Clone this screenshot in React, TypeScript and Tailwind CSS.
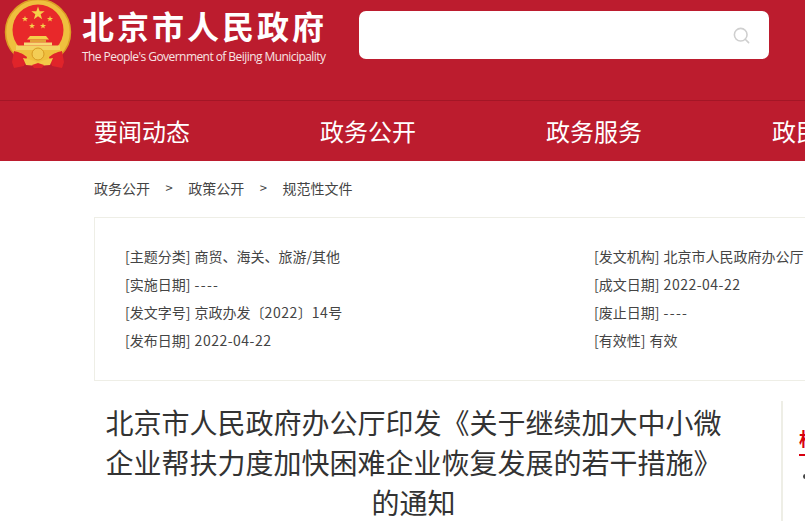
import { Search } from "lucide-react";

const cjk = "font-['Microsoft_YaHei','Noto_Sans_CJK_SC',sans-serif]";

const navItems = ["要闻动态", "政务公开", "政务服务", "政民互动"];

const leftMeta = [
  ["[主题分类]", "商贸、海关、旅游/其他"],
  ["[实施日期]", "----"],
  ["[发文字号]", "京政办发〔2022〕14号"],
  ["[发布日期]", "2022-04-22"],
];

const rightMeta = [
  ["[发文机构]", "北京市人民政府办公厅"],
  ["[成文日期]", "2022-04-22"],
  ["[废止日期]", "----"],
  ["[有效性]", "有效"],
];

function Emblem() {
  const stars = [
    [38, 14.5, 7],
    [25, 20, 3.2],
    [50, 20, 3.2],
    [32, 27, 3.2],
    [43, 27, 3.2],
  ];
  const star = (cx: number, cy: number, r: number) =>
    Array.from({ length: 10 }, (_, i) => {
      const a = (Math.PI / 5) * i - Math.PI / 2;
      const d = i % 2 ? r * 0.4 : r;
      return `${cx + d * Math.cos(a)},${cy + d * Math.sin(a)}`;
    }).join(" ");
  return (
    <svg viewBox="0 0 76 72" className="w-[76px] h-[72px] shrink-0">
      <circle cx="38" cy="33" r="32.5" fill="#efbf3e" stroke="#dc9f24" strokeWidth="1.5" />
      <circle cx="38" cy="31" r="25.5" fill="#e8282a" />
      {stars.map(([x, y, r]) => (
        <polygon key={`${x}-${y}`} points={star(x, y, r)} fill="#f5cf4a" />
      ))}
      <path d="M30 37h16l3 3.5H27z" fill="#f5cf4a" />
      <path d="M30 40.5h16v3H30z" fill="#e3a238" />
      <path d="M24 43.5h28v3H24z" fill="#f6d975" />
      <path d="M16 46.5h44V51H16z" fill="#f3d264" />
      <path d="M13 51h50l-3 9H16z" fill="#efbf3e" />
      <path d="M14 52c4 1 8 2 13 6l-3 9-10 2-2-6z" fill="#e0242a" />
      <path d="M62 52c-4 1-8 2-13 6l3 9 10 2 2-6z" fill="#e0242a" />
      <circle cx="38" cy="55" r="6" fill="#f3cd55" stroke="#d89a22" strokeWidth="1" />
      <path d="M23 59c5 1 10 2 15 5 5-3 10-4 15-5l-3 7-12 1-12-1z" fill="#f3c848" />
      <path d="M32 66l6-2 6 2-2 3h-8z" fill="#e0242a" />
    </svg>
  );
}

// digits and dashes run a little wider than the CJK font's own
function MetaValue({ value }: { value: string }) {
  return (
    <span className="ml-[1px]">
      {value.split(/([\d-]+)/).map((part, i) =>
        /^-+$/.test(part) ? (
          <span key={i} className="tracking-[1.3px]">{part}</span>
        ) : /^[\d-]+$/.test(part) ? (
          <span key={i} className="tracking-[0.5px]">{part}</span>
        ) : (
          <span key={i}>{part}</span>
        )
      )}
    </span>
  );
}

function MetaColumn({ rows }: { rows: string[][] }) {
  return (
    <div className="flex flex-col shrink-0">
      {rows.map(([label, value]) => (
        <div key={label} className="h-[28px] leading-[28px] text-[14px] text-[#444] whitespace-nowrap">
          <span>{label}</span> <MetaValue value={value} />
        </div>
      ))}
    </div>
  );
}

export default function App() {
  return (
    <div className={`w-[805px] h-[521px] overflow-hidden bg-white ${cjk}`}>
      <header className="bg-[#bc1c2e]">
        <div className="h-[101px] border-b border-[#a31626] flex items-start">
          <div className="mt-[-1px]">
            <Emblem />
          </div>
          <div className="ml-[6px] w-[272px] shrink-0">
            <div className="text-[32px] leading-[50px] font-bold text-white tracking-[3px] whitespace-nowrap">
              北京市人民政府
            </div>
            <div className="mt-[-1px] text-[12px] leading-[16px] text-[#f8e4e4] tracking-[-0.56px] whitespace-nowrap font-['Open_Sans',sans-serif]">
              The People's Government of Beijing Municipality
            </div>
          </div>
          <div className="mt-[11px] w-[410px] h-[48px] ml-[5px] bg-white rounded-[7px] flex items-center justify-end pr-[18px] shrink-0">
            <Search className="w-[19px] h-[19px] text-[#cfcfcf]" strokeWidth={2} />
          </div>
        </div>
        <nav className="h-[60px] flex items-center gap-[130px] pl-[94px] whitespace-nowrap">
          {navItems.map((item) => (
            <span key={item} className="text-[24px] leading-[60px] text-white shrink-0">
              {item}
            </span>
          ))}
        </nav>
      </header>

      <div className="pl-[94px] w-[1100px]">
        <div className="h-[56px] pb-[2px] flex items-center text-[14px] text-[#444] whitespace-nowrap">
          <span>政务公开</span>
          <span className="mx-[15.5px] text-[13px]">&gt;</span>
          <span>政策公开</span>
          <span className="mx-[15.5px] text-[13px]">&gt;</span>
          <span>规范性文件</span>
        </div>

        <div className="h-[164px] w-[960px] border border-[#eeeee6] flex items-center pl-[30px] pb-[2px]">
          <div className="w-[469px] shrink-0">
            <MetaColumn rows={leftMeta} />
          </div>
          <MetaColumn rows={rightMeta} />
        </div>

        <div className="flex mt-[20px]">
          <h1 className="w-[639px] shrink-0 text-center text-[28px] leading-[40px] font-normal text-[#333] pt-[1px]">
            北京市人民政府办公厅印发《关于继续加大中小微企业帮扶力度加快困难企业恢复发展的若干措施》的通知
          </h1>
          <div className="ml-[48px] border-l-2 border-[#eeeee6] h-[200px] pl-[16px] pt-[24px]">
            <div className="w-[120px] text-[18px] leading-[26px] font-bold text-[#d7000f] whitespace-nowrap">
              相关文件
            </div>
            <div className="w-[40px] h-[2px] bg-[#d7000f] mt-[3px]" />
            <div className="w-[5px] h-[5px] rounded-full bg-[#444] mt-[18px] ml-[4px]" />
          </div>
        </div>
      </div>
    </div>
  );
}
